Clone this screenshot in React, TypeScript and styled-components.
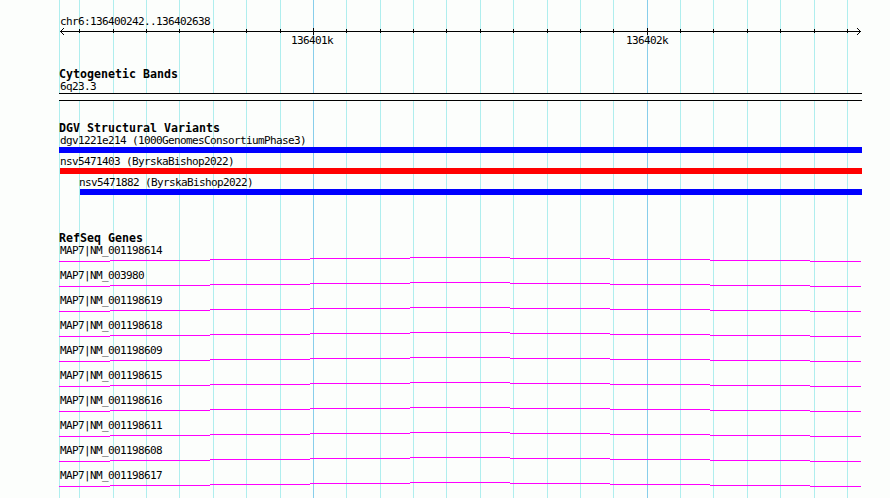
import React from "react";
import styled, { createGlobalStyle } from "styled-components";

const GlobalStyle = createGlobalStyle`
  body {
    margin: 0;
    background: #fcfefc;
  }
`;

const BrowserStyled = styled.div`
  position: relative;
  box-sizing: border-box;
  width: 890px;
  height: 498px;
  padding: 15px 28px 0 59px;
  overflow: hidden;
  background: #fcfefc;
  color: #000;
  font-family: "DejaVu Sans Mono", monospace;
`;

const GridLineStyled = styled.i<{ $x: number; $major: boolean }>`
  position: absolute;
  top: 0;
  bottom: 0;
  left: ${({ $x }) => $x}px;
  width: 1px;
  background: ${({ $major }) => ($major ? "#87ceeb" : "#afeeee")};
`;

const TracksStyled = styled.div`
  position: relative;
  display: flex;
  flex-direction: column;
`;

const TrackStyled = styled.section<{ $height: number }>`
  display: flex;
  flex: none;
  flex-direction: column;
  height: ${({ $height }) => $height}px;
`;

const TitleStyled = styled.h2`
  flex: none;
  height: 12px;
  margin: 0;
  font-size: 11.6px;
  font-weight: bold;
  line-height: 12px;
  letter-spacing: 0.017px;
  white-space: pre;
`;

const LabelStyled = styled.div`
  flex: none;
  height: 12px;
  padding-left: 1px;
  font-size: 11px;
  line-height: 14px;
  letter-spacing: -0.622px;
  white-space: pre;
`;

const AxisStyled = styled.svg`
  display: block;
  flex: none;
  width: 803px;
  height: 7px;
  margin-top: 1px;
`;

const ScaleStyled = styled.div`
  display: flex;
  gap: 292px;
  margin-top: -1px;
  padding-left: 231px;
`;

const BandStyled = styled.div`
  box-sizing: border-box;
  flex: none;
  height: 8px;
  margin-top: 1px;
  border: solid #000;
  border-width: 1px 0;
  background: #fcfefc;
`;

const VariantStyled = styled.div<{ $offset: number }>`
  flex: none;
  height: 21px;
  padding-left: ${({ $offset }) => $offset}px;
`;

const VariantLabelStyled = styled(LabelStyled)<{ $indent: number }>`
  margin-left: ${({ $indent }) => $indent}px;
  padding-left: 0;
`;

const BarStyled = styled.div<{ $color: string }>`
  height: 6px;
  margin-top: 1px;
  background: ${({ $color }) => $color};
`;

const GeneStyled = styled.div`
  flex: none;
  height: 25px;
`;

const IntronStyled = styled.svg`
  display: block;
  width: 803px;
  height: 5px;
  margin-top: 1px;
`;

const GRID = [
  59, 79, 113, 146, 179, 213, 246, 280, 313, 346, 380, 413, 446, 480, 513, 547,
  580, 613, 647, 680, 713, 747, 780, 814, 847,
];
const MAJOR = [313, 647];

const VARIANTS = [
  {
    name: "dgv1221e214 (1000GenomesConsortiumPhase3)",
    color: "#0000ff",
    offset: 0,
    indent: 1,
  },
  {
    name: "nsv5471403 (ByrskaBishop2022)",
    color: "#ff0000",
    offset: 1,
    indent: 0,
  },
  {
    name: "nsv5471882 (ByrskaBishop2022)",
    color: "#0000ff",
    offset: 21,
    indent: -1,
  },
];

const GENES = [
  "NM_001198614",
  "NM_003980",
  "NM_001198619",
  "NM_001198618",
  "NM_001198609",
  "NM_001198615",
  "NM_001198616",
  "NM_001198611",
  "NM_001198608",
  "NM_001198617",
];

const Axis: React.FC = () => (
  <AxisStyled viewBox="0 0 803 7" shapeRendering="crispEdges">
    <path d="M1 3h801v1H1z" />
    {GRID.slice(1).map((x) =>
      MAJOR.includes(x) ? (
        <rect key={x} x={x - 59} y={0} width={1} height={7} />
      ) : (
        <rect key={x} x={x - 59} y={1} width={1} height={4} />
      ),
    )}
    <path d="M2 2h1v1H2zM3 1h1v1H3zM4 0h1v1H4zM2 4h1v1H2zM3 5h1v1H3zM4 6h1v1H4z" />
    <path d="M800 2h1v1h-1zM799 1h1v1h-1zM798 0h1v1h-1zM800 4h1v1h-1zM799 5h1v1h-1zM798 6h1v1h-1z" />
  </AxisStyled>
);

// the intron rises and falls by one pixel every hundred pixels
const Intron: React.FC = () => (
  <IntronStyled viewBox="0 0 803 5" shapeRendering="crispEdges">
    <path
      fill="#ff00ff"
      d="M0 4h51v1H0zM51 3h100v1H51zM151 2h100v1H151zM251 1h100v1H251zM351 0h100v1H351zM451 1h100v1H451zM551 2h100v1H551zM651 3h100v1H651zM751 4h51v1H751z"
    />
  </IntronStyled>
);

const App: React.FC = () => {
  return (
    <>
      <GlobalStyle />
      <BrowserStyled>
        {GRID.map((x) => (
          <GridLineStyled key={x} $x={x} $major={MAJOR.includes(x)} />
        ))}
        <TracksStyled>
          <TrackStyled $height={53}>
            <LabelStyled>chr6:136400242..136402638</LabelStyled>
            <Axis />
            <ScaleStyled>
              <LabelStyled>136401k</LabelStyled>
              <LabelStyled>136402k</LabelStyled>
            </ScaleStyled>
          </TrackStyled>
          <TrackStyled $height={54}>
            <TitleStyled>Cytogenetic Bands</TitleStyled>
            <LabelStyled>6q23.3</LabelStyled>
            <BandStyled />
          </TrackStyled>
          <TrackStyled $height={110}>
            <TitleStyled>DGV Structural Variants</TitleStyled>
            {VARIANTS.map(({ name, color, offset, indent }) => (
              <VariantStyled key={name} $offset={offset}>
                <VariantLabelStyled $indent={indent}>{name}</VariantLabelStyled>
                <BarStyled $color={color} />
              </VariantStyled>
            ))}
          </TrackStyled>
          <TrackStyled $height={266}>
            <TitleStyled>RefSeq Genes</TitleStyled>
            {GENES.map((gene) => (
              <GeneStyled key={gene}>
                <LabelStyled>{`MAP7|${gene}`}</LabelStyled>
                <Intron />
              </GeneStyled>
            ))}
          </TrackStyled>
        </TracksStyled>
      </BrowserStyled>
    </>
  );
};

export default App;
